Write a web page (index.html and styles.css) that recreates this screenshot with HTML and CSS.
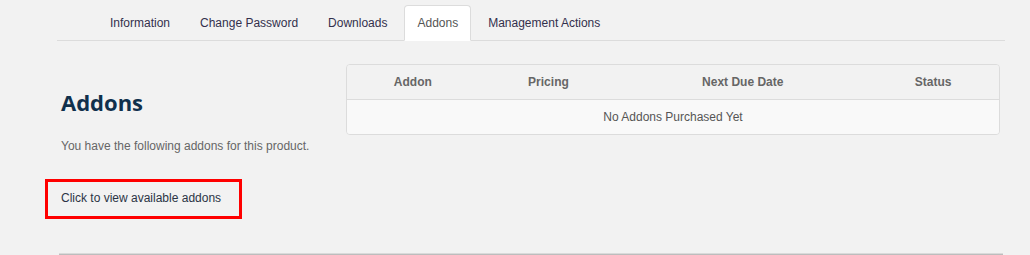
FILE: index.html
```html
<!DOCTYPE html>
<html lang="en">
<head>
    <meta charset="UTF-8">
    <meta name="viewport" content="width=device-width, initial-scale=1.0">
    <title>Product Details - Addons</title>
    <link rel="stylesheet" href="styles.css">
</head>
<body>
    <div class="page">
        <ul class="nav-tabs">
            <li><a href="#">Information</a></li>
            <li><a href="#">Change Password</a></li>
            <li><a href="#">Downloads</a></li>
            <li class="active"><a href="#">Addons</a></li>
            <li><a href="#">Management Actions</a></li>
        </ul>

        <div class="tab-content">
            <div class="addons-info">
                <h2>Addons</h2>
                <p>You have the following addons for this product.</p>
                <a class="btn-addons" href="#">Click to view available addons</a>
            </div>

            <div class="table-wrap">
                <table class="addons-table">
                    <thead>
                        <tr>
                            <th class="col-addon">Addon</th>
                            <th class="col-pricing">Pricing</th>
                            <th class="col-due">Next Due Date</th>
                            <th class="col-status">Status</th>
                        </tr>
                    </thead>
                    <tbody>
                        <tr>
                            <td colspan="4">No Addons Purchased Yet</td>
                        </tr>
                    </tbody>
                </table>
            </div>
        </div>

        <div class="footer-line"></div>
    </div>
</body>
</html>
```

FILE: styles.css
```css
body {
    margin: 0;
    background-color: #f2f2f2;
    font-family: "Liberation Sans", Arial, sans-serif;
    font-size: 12px;
    line-height: 16px;
    color: #555;
}
.page {
    margin: 0 25px 0 57px;
}
.nav-tabs {
    display: flex;
    list-style: none;
    margin: 5px 0 0 0;
    padding: 0 0 0 40px;
    border-bottom: 1px solid #dcdcdc;
}
.nav-tabs li {
    margin-right: 4px;
    margin-bottom: -1px;
}
.nav-tabs a {
    display: block;
    padding: 9px 12px;
    color: #33304c;
    text-decoration: none;
    border: 1px solid transparent;
    border-radius: 4px 4px 0 0;
}
.nav-tabs li.active a {
    background-color: white;
    color: #555;
    border-color: #dcdcdc;
    border-bottom-color: white;
}
.tab-content {
    display: flex;
    padding: 23px 5px 0 4px;
}
.addons-info {
    width: 285px;
}
.addons-info h2 {
    margin: 23px 0 0 0;
    font-family: "Open Sans", sans-serif;
    font-weight: 700;
    font-size: 22px;
    line-height: 30px;
    color: #10304c;
}
.addons-info p {
    margin: 21px 0 0 0;
    color: #666;
}
.btn-addons {
    display: inline-block;
    margin: 25px 0 0 -16px;
    padding: 8px 18px 10px 13px;
    border: 3px solid #ff0000;
    color: #2b3445;
    text-decoration: none;
}
.table-wrap {
    flex: 1;
    border: 1px solid #dcdcdc;
    border-radius: 4px;
    overflow: hidden;
    align-self: flex-start;
}
.addons-table {
    width: 100%;
    border-collapse: collapse;
}
.addons-table th {
    height: 34px;
    padding: 0;
    background-color: #f2f2f2;
    border-bottom: 1px solid #dcdcdc;
    color: #666;
    font-weight: bold;
    text-align: center;
}
.col-addon { width: 20.2%; }
.col-pricing { width: 21.4%; }
.col-due { width: 38.2%; }
.col-status { width: 20.2%; }
.addons-table td {
    height: 34px;
    padding: 0;
    background-color: #f9f9f9;
    text-align: center;
    color: #555;
}
.footer-line {
    margin: 34px 2px 0 2px;
    height: 1px;
    background-color: #bdbdbd;
    border-top: 1px solid #dadada;
}
```
